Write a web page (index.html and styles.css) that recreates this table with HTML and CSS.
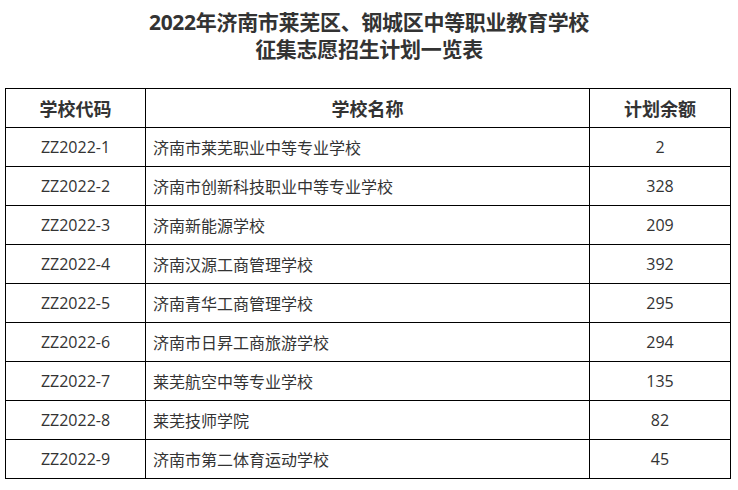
FILE: index.html
```html
<!DOCTYPE html>
<html lang="zh">
<head>
<meta charset="utf-8">
<link rel="stylesheet" href="styles.css">
</head>
<body>
<div class="page">
  <h1 class="title">2022年济南市莱芜区、钢城区中等职业教育学校<br>征集志愿招生计划一览表</h1>
  <table class="plan">
    <colgroup><col class="c1"><col class="c2"><col class="c3"></colgroup>
    <thead>
      <tr><th>学校代码</th><th>学校名称</th><th>计划余额</th></tr>
    </thead>
    <tbody>
      <tr><td class="code">ZZ2022-1</td><td class="name">济南市莱芜职业中等专业学校</td><td class="num">2</td></tr>
      <tr><td class="code">ZZ2022-2</td><td class="name">济南市创新科技职业中等专业学校</td><td class="num">328</td></tr>
      <tr><td class="code">ZZ2022-3</td><td class="name">济南新能源学校</td><td class="num">209</td></tr>
      <tr><td class="code">ZZ2022-4</td><td class="name">济南汉源工商管理学校</td><td class="num">392</td></tr>
      <tr><td class="code">ZZ2022-5</td><td class="name">济南青华工商管理学校</td><td class="num">295</td></tr>
      <tr><td class="code">ZZ2022-6</td><td class="name">济南市日昇工商旅游学校</td><td class="num">294</td></tr>
      <tr><td class="code">ZZ2022-7</td><td class="name">莱芜航空中等专业学校</td><td class="num">135</td></tr>
      <tr><td class="code">ZZ2022-8</td><td class="name">莱芜技师学院</td><td class="num">82</td></tr>
      <tr><td class="code">ZZ2022-9</td><td class="name">济南市第二体育运动学校</td><td class="num">45</td></tr>
    </tbody>
  </table>
</div>
</body>
</html>
```
FILE: styles.css
```css
html, body {
  margin: 0;
  padding: 0;
  background: #fff;
}
.page {
  padding: 9px 0 0 5px;
  font-family: "Open Sans", "Noto Sans CJK SC", sans-serif;
  color: #333;
}
.title {
  margin: 0 0 0 -5px;
  width: 738px;
  text-align: center;
  font-size: 21px;
  line-height: 27px;
  font-weight: bold;
  letter-spacing: -0.3px;
  color: #333;
}
.plan {
  margin-top: 25px;
  width: 725px;
  border-collapse: collapse;
  table-layout: fixed;
  border: 1.5px solid #000;
}
.c1 { width: 140px; }
.c2 { width: 444px; }
.c3 { width: 141px; }
.plan th, .plan td {
  border: 1px solid #000;
  height: 38px;
  padding: 0;
  font-size: 16px;
  text-align: center;
  vertical-align: middle;
}
.plan th {
  font-size: 18px;
  font-weight: bold;
  color: #333;
}
.plan td.name {
  text-align: left;
  padding-left: 7px;
}
```
